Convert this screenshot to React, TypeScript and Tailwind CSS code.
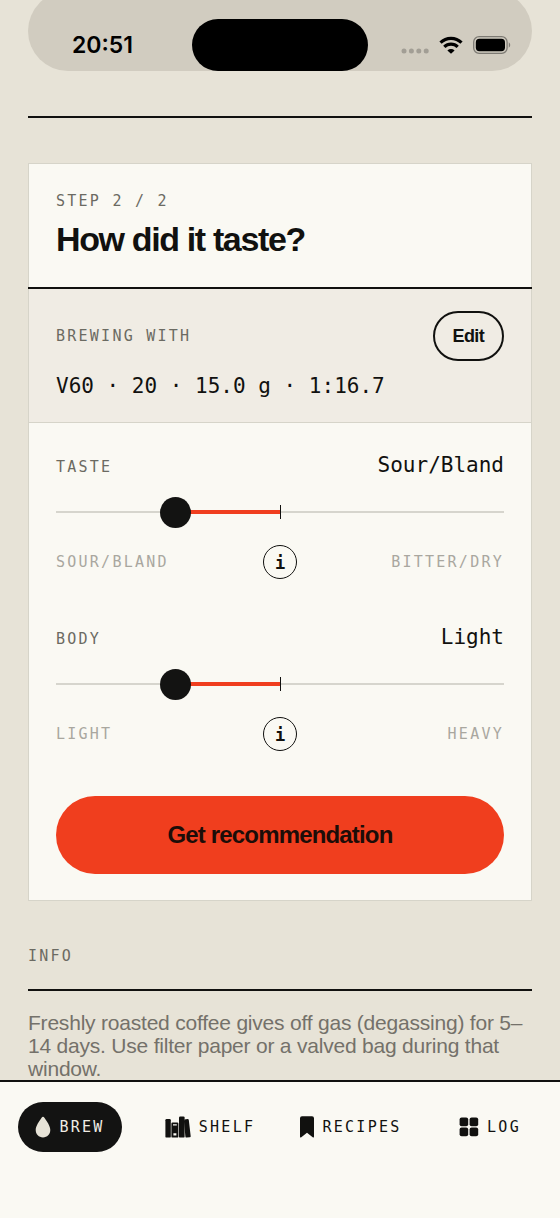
import { useState } from "react";
import type { ReactNode } from "react";

const label = "font-['DejaVu_Sans_Mono',monospace] text-[15px] leading-5 tracking-[0.15em] uppercase";
const value = "font-['DejaVu_Sans_Mono',monospace] text-[21px] leading-7 text-[#11110f]";

function StatusBar() {
  return (
    <header className="shrink-0 overflow-hidden px-7">
      <div className="-mt-[9px] grid h-20 grid-cols-[1fr_176px_1fr] items-center rounded-[40px] bg-[#d1ccc0] pt-7">
        <time className="pl-[44px] font-[Inter,sans-serif] text-[23px] leading-[52px] font-semibold text-black">20:51</time>
        <div className="h-[52px] rounded-full bg-black" />
        <div className="flex items-center justify-end gap-[10px] pr-[21px]">
          <svg className="mt-3" width="28" height="6" viewBox="0 0 28 6" fill="#a29e95" aria-hidden="true">
            <circle cx="3" cy="3" r="2.5" />
            <circle cx="10.4" cy="3" r="2.5" />
            <circle cx="17.8" cy="3" r="2.5" />
            <circle cx="25.2" cy="3" r="2.5" />
          </svg>
          <svg width="24" height="18" viewBox="0 0 24 18" aria-hidden="true">
            <g fill="none" stroke="#000" strokeWidth="3.2">
              <path d="M1.5 6.7 A15 15 0 0 1 22.5 6.7" />
              <path d="M5.3 10.9 A9.6 9.6 0 0 1 18.7 10.9" />
            </g>
            <path d="M12 17.8 L8.4 14.4 A5.1 5.1 0 0 1 15.6 14.4 Z" />
          </svg>
          <svg width="38" height="18" viewBox="0 0 38 18" aria-hidden="true">
            <rect x="0.7" y="0.7" width="33.4" height="16.6" rx="5.4" fill="none" stroke="#7d7a73" strokeWidth="1.3" />
            <rect x="2.8" y="2.8" width="29.2" height="12.4" rx="3.6" />
            <path d="M35.8 6.2 A3.4 3.4 0 0 1 35.8 11.8 Z" fill="#7d7a73" />
          </svg>
        </div>
      </div>
    </header>
  );
}

type ScaleProps = { id: string; name: string; low: string; high: string };

function Scale({ id, name, low, high }: ScaleProps) {
  const [amount, setAmount] = useState(25);
  const reading = amount < 50 ? low : amount > 50 ? high : "Balanced";
  return (
    <div>
      <div className="flex items-baseline justify-between">
        <label htmlFor={id} className={`${label} text-[#6b6a62]`}>{name}</label>
        <output htmlFor={id} className={value}>{reading}</output>
      </div>
      <div className="relative mt-[17px] flex h-8 items-center">
        <div className="h-[2px] w-full bg-[#d6d5cd]" />
        <div
          className="absolute top-[14px] h-1 bg-[#f03e1e]"
          style={{ left: `${Math.min(amount, 50)}%`, width: `${Math.abs(50 - amount)}%` }}
        />
        <div className="absolute top-[9px] left-1/2 h-[14px] w-px bg-[#11110f]" />
        <input
          id={id}
          type="range"
          min={0}
          max={100}
          value={amount}
          onChange={(e) => setAmount(Number(e.target.value))}
          className="absolute inset-0 m-0 h-8 w-full cursor-pointer appearance-none bg-transparent [&::-moz-range-thumb]:size-[31px] [&::-moz-range-thumb]:rounded-full [&::-moz-range-thumb]:border-0 [&::-moz-range-thumb]:bg-[#131312] [&::-webkit-slider-thumb]:size-[31px] [&::-webkit-slider-thumb]:appearance-none [&::-webkit-slider-thumb]:rounded-full [&::-webkit-slider-thumb]:bg-[#131312]"
        />
      </div>
      <div className="mt-[17px] grid grid-cols-[1fr_34px_1fr] items-center">
        <span className={`${label} text-[#a9a79f]`}>{low}</span>
        <button
          type="button"
          aria-label={`About ${name}`}
          className="size-[34px] rounded-full border border-[#11110f] pt-px font-['DejaVu_Sans_Mono',monospace] text-[17px] leading-[30px] font-bold text-[#11110f]"
        >
          i
        </button>
        <span className={`${label} text-right text-[#a9a79f]`}>{high}</span>
      </div>
    </div>
  );
}

function BrewCard() {
  return (
    <section className="mt-[45px] border border-[#d6d4c9] bg-[#faf9f3]">
      <div className="-mx-px border-b-2 border-[#11110f] px-7 pt-[27px] pb-7">
        <p className={`${label} text-[#6b6a62]`}>Step 2 / 2</p>
        <h1 className="mt-2 text-[34px] leading-10 font-bold tracking-[-0.04em] text-[#11110f]">How did it taste?</h1>
      </div>
      <div className="border-b border-[#d6d4c9] bg-[#f0ece4] px-[27px] pt-[22px] pb-[22px]">
        <div className="flex items-center justify-between">
          <p className={`${label} text-[#6b6a62]`}>Brewing with</p>
          <button
            type="button"
            className="h-[50px] rounded-full border-2 border-[#11110f] px-[18px] text-[18px] font-bold tracking-[-0.035em] text-[#11110f]"
          >
            Edit
          </button>
        </div>
        <p className={`${value} mt-[11px]`}>V60 · 20 · 15.0 g · 1:16.7</p>
      </div>
      <div className="flex flex-col gap-[45px] px-[27px] pt-7 pb-[26px]">
        <div className="flex flex-col gap-11">
          <Scale id="taste" name="Taste" low="Sour/Bland" high="Bitter/Dry" />
          <Scale id="body" name="Body" low="Light" high="Heavy" />
        </div>
        <button
          type="button"
          className="h-[78px] w-full rounded-full bg-[#f03e1e] text-[24px] font-bold tracking-[-0.035em] text-[#1c0d08]"
        >
          Get recommendation
        </button>
      </div>
    </section>
  );
}

type TabProps = { href: string; text: string; active?: boolean; children: ReactNode };

function Tab({ href, text, active, children }: TabProps) {
  return (
    <a
      href={href}
      aria-current={active ? "page" : undefined}
      className={`flex h-[50px] items-center gap-2 justify-self-center rounded-full px-[17px] ${
        active ? "bg-[#131312] text-[#f0ece4]" : "text-[#11110f]"
      }`}
    >
      {children}
      <span className={label}>{text}</span>
    </a>
  );
}

function TabBar() {
  return (
    <nav className="grid shrink-0 grid-cols-4 border-t-2 border-[#11110f] bg-[#faf9f3] pt-5 pb-[66px]">
      <Tab href="#brew" text="Brew" active>
        <svg width="16" height="22" viewBox="0 0 16 22" fill="#e7e3d7" aria-hidden="true">
          <path d="M8 .8 C8.6 .8 9 1.1 9.4 1.7 C12 5.4 15.3 10 15.3 14 C15.3 18.4 12.2 21.4 8 21.4 C3.8 21.4 .7 18.4 .7 14 C.7 10 4 5.4 6.6 1.7 C7 1.1 7.4 .8 8 .8 Z" />
        </svg>
      </Tab>
      <Tab href="#shelf" text="Shelf">
        <svg width="26" height="22" viewBox="0 0 26 22" fill="currentColor" aria-hidden="true">
          <rect x="0.4" y="3" width="5.4" height="18.6" rx="1.2" />
          <path fillRule="evenodd" d="M7.6 6.4 H12.2 A1.2 1.2 0 0 1 13.4 7.6 V20.4 A1.2 1.2 0 0 1 12.2 21.6 H7.6 A1.2 1.2 0 0 1 6.4 20.4 V7.6 A1.2 1.2 0 0 1 7.6 6.4 Z M8 8.2 V9.4 H11.8 V8.2 Z M8.4 17.2 V19.4 H11.4 V17.2 Z" />
          <rect x="14" y="0.4" width="5.6" height="21.2" rx="1.2" />
          <path d="M19.4 3.4 L22.6 3 Q23.6 2.9 23.8 3.9 L25.7 20.2 Q25.8 21.2 24.8 21.3 L21.6 21.6 Q20.6 21.7 20.4 20.7 L19 5.4 Z" />
        </svg>
      </Tab>
      <Tab href="#recipes" text="Recipes">
        <svg width="16" height="22" viewBox="0 0 16 22" fill="currentColor" aria-hidden="true">
          <path d="M3 0.2 H13 A2 2 0 0 1 15 2.2 V20.6 Q15 22.2 13.7 21.2 L8 16.8 L2.3 21.2 Q1 22.2 1 20.6 V2.2 A2 2 0 0 1 3 0.2 Z" />
        </svg>
      </Tab>
      <Tab href="#log" text="Log">
        <svg width="20" height="20" viewBox="0 0 20 20" fill="currentColor" aria-hidden="true">
          <rect x="0.6" y="0.6" width="8.6" height="8.6" rx="2" />
          <rect x="10.6" y="0.6" width="8.6" height="8.6" rx="2" />
          <rect x="0.6" y="10.6" width="8.6" height="8.6" rx="2" />
          <rect x="10.6" y="10.6" width="8.6" height="8.6" rx="2" />
        </svg>
      </Tab>
    </nav>
  );
}

export default function App() {
  return (
    <div className="flex h-dvh flex-col bg-[#e7e3d7] font-['Liberation_Sans',Arial,sans-serif]">
      <StatusBar />
      <main className="min-h-0 flex-1 overflow-y-auto px-7 pt-[45px] [scrollbar-width:none]">
        <hr className="border-0 border-t-2 border-[#11110f]" />
        <BrewCard />
        <section className="pt-[45px]">
          <h2 className={`${label} border-b-2 border-[#11110f] pb-[23px] text-[#6b6a62]`}>Info</h2>
          <p className="mt-5 text-[21px] leading-[23px] tracking-[-0.01em] text-[#74716a]">
            Freshly roasted coffee gives off gas (degassing) for 5–14 days. Use filter paper or a valved bag during
            that window.
          </p>
        </section>
      </main>
      <TabBar />
    </div>
  );
}
